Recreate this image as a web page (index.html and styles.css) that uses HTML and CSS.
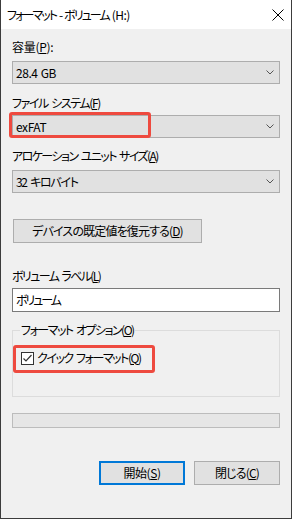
FILE: index.html
```html
<!DOCTYPE html>
<html lang="ja">
<head>
<meta charset="utf-8">
<title>フォーマット - ボリューム (H:)</title>
<link rel="stylesheet" href="styles.css">
</head>
<body>
<div class="window">
  <div class="titlebar">
    <span class="title">フォーマット - ボリューム <span class="drive">(H:)</span></span>
    <svg class="close" width="12" height="12" viewBox="0 0 12 12"><path d="M0.5 0.5L11.5 11.5M11.5 0.5L0.5 11.5" stroke="#000" stroke-width="1"/></svg>
  </div>
  <div class="content">
    <div class="label ls-cap">容量(<u>P</u>):</div>
    <div class="combo c1"><span class="ls-num">28.4 GB</span><svg class="chev" width="8" height="5" viewBox="0 0 8 5"><path d="M0.5 0.5L4 4L7.5 0.5" fill="none" stroke="#555" stroke-width="1"/></svg></div>

    <div class="label l2 ls-fs">ファイル システム(<u>F</u>)</div>
    <div class="combo c2"><span class="ls-num">exFAT</span><svg class="chev" width="8" height="5" viewBox="0 0 8 5"><path d="M0.5 0.5L4 4L7.5 0.5" fill="none" stroke="#555" stroke-width="1"/></svg><div class="mark mark1"></div></div>

    <div class="label l3 ls-alloc">アロケーション ユニット サイズ(<u>A</u>)</div>
    <div class="combo c3"><span class="ls-kb">32 キロバイト</span><svg class="chev" width="8" height="5" viewBox="0 0 8 5"><path d="M0.5 0.5L4 4L7.5 0.5" fill="none" stroke="#555" stroke-width="1"/></svg></div>

    <div class="btn restore"><span class="ls-restore">デバイスの既定値を復元する(<u>D</u>)</span></div>

    <div class="label l4 ls-vol">ボリューム ラベル(<u>L</u>)</div>
    <div class="textbox ls-volname">ボリューム</div>

    <fieldset class="group">
      <legend class="ls-opt">フォーマット オプション(<u>O</u>)</legend>
      <div class="checkrow">
        <span class="checkbox"><svg width="11" height="11" viewBox="0 0 11 11"><path d="M1.5 5.5L4 8L9.5 2" fill="none" stroke="#333" stroke-width="1.2"/></svg></span>
        <span class="ls-quick">クイック フォーマット(<u>Q</u>)</span>
        <div class="mark mark2"></div>
      </div>
    </fieldset>

    <div class="progress"></div>

    <div class="footer">
      <div class="btn primary"><span class="ls-start">開始(<u>S</u>)</span></div>
      <div class="btn"><span class="ls-close">閉じる(<u>C</u>)</span></div>
    </div>
  </div>
</div>
</body>
</html>
```

FILE: styles.css
```css
html, body {
  margin: 0;
  padding: 0;
  background: #f0f0f0;
}
body {
  font-family: "Noto Sans CJK JP", "Noto Sans", sans-serif;
  font-size: 12px;
  color: #000;
  font-feature-settings: "palt";
}
u { text-decoration: underline; text-underline-offset: 1px; }

/* tighter tracking to approximate the narrow Windows UI font */
.title { letter-spacing: -1.9px; word-spacing: 2px; }
.title .drive { letter-spacing: -0.5px; }
.ls-cap { letter-spacing: -0.3px; }
.ls-num { letter-spacing: -0.45px; word-spacing: 1px; }
.ls-fs { letter-spacing: -1.4px; word-spacing: 2px; }
.ls-alloc { letter-spacing: -1.55px; word-spacing: 2px; }
.ls-kb { letter-spacing: -1.3px; word-spacing: 2px; }
.ls-restore { letter-spacing: -0.85px; }
.ls-vol { letter-spacing: -1.6px; word-spacing: 2px; }
.ls-volname { letter-spacing: -2.1px; }
.ls-opt { letter-spacing: -1.5px; word-spacing: 2px; }
.ls-quick { letter-spacing: -1.45px; word-spacing: 2px; }
.ls-start { letter-spacing: -0.45px; }
.ls-close { letter-spacing: -0.8px; }

.window {
  width: 292px;
  height: 519px;
  box-sizing: border-box;
  border: 1px solid #3c3c3c;
  border-top: none;
  background: #f0f0f0;
}
.titlebar {
  height: 29px;
  background: #fff;
  display: flex;
  align-items: center;
  justify-content: space-between;
  padding: 0 7px 0 6px;
}
.title { line-height: 16px; white-space: nowrap; }
.close { display: block; }
.content {
  padding: 10px 11px 0;
  display: flex;
  flex-direction: column;
}
.label {
  height: 16px;
  line-height: 16px;
  white-space: nowrap;
}
.l2 { margin-top: 11px; }
.l3 { margin-top: 10px; }
.l4 { margin-top: 25px; }
.combo {
  position: relative;
  height: 23px;
  box-sizing: border-box;
  border: 1px solid #adadad;
  background: #e1e1e1;
  display: flex;
  align-items: center;
  justify-content: space-between;
  padding: 0 5px 0 3px;
  line-height: 16px;
  white-space: nowrap;
}
.chev { display: block; }
.c1 { margin-top: 6px; }
.c2 { margin-top: 4px; }
.c3 { margin-top: 6px; }
.mark {
  position: absolute;
  box-sizing: border-box;
  border: 3px solid #ee4a3f;
  border-radius: 3px;
}
.mark1 { left: -4px; top: -4px; width: 142px; height: 26px; }
.btn {
  height: 24px;
  box-sizing: border-box;
  border: 1px solid #adadad;
  background: #e1e1e1;
  display: flex;
  align-items: center;
  justify-content: center;
  line-height: 16px;
  white-space: nowrap;
}
.restore {
  margin-top: 26px;
  margin-left: 1px;
  width: 189px;
}
.textbox {
  margin-top: 4px;
  height: 24px;
  box-sizing: border-box;
  border: 1px solid #7a7a7a;
  background: #fff;
  padding: 0 3px;
  line-height: 22px;
}
.group {
  margin: 10px 0 0;
  padding: 12px 7px 30px;
  border: 1px solid #dcdcdc;
  min-width: 0;
}
.group legend {
  padding: 0 1px;
  line-height: 16px;
  height: 16px;
}
.checkrow {
  position: relative;
  display: flex;
  align-items: center;
  gap: 3px;
  height: 16px;
  line-height: 16px;
  margin-left: 1px;
  white-space: nowrap;
}
.checkbox {
  width: 13px;
  height: 13px;
  box-sizing: border-box;
  border: 1px solid #333;
  background: #fff;
  display: flex;
  align-items: center;
  justify-content: center;
}
.checkbox svg { display: block; }
.mark2 { left: -8px; top: -5px; width: 142px; height: 28px; }
.progress {
  margin-top: 16px;
  height: 15px;
  box-sizing: border-box;
  border: 1px solid #bcbcbc;
  background: #e6e6e6;
}
.footer {
  margin-top: 33px;
  display: flex;
  justify-content: flex-end;
  gap: 9px;
}
.footer .btn { width: 86px; }
.footer .primary { border: 2px solid #0078d7; }
```
